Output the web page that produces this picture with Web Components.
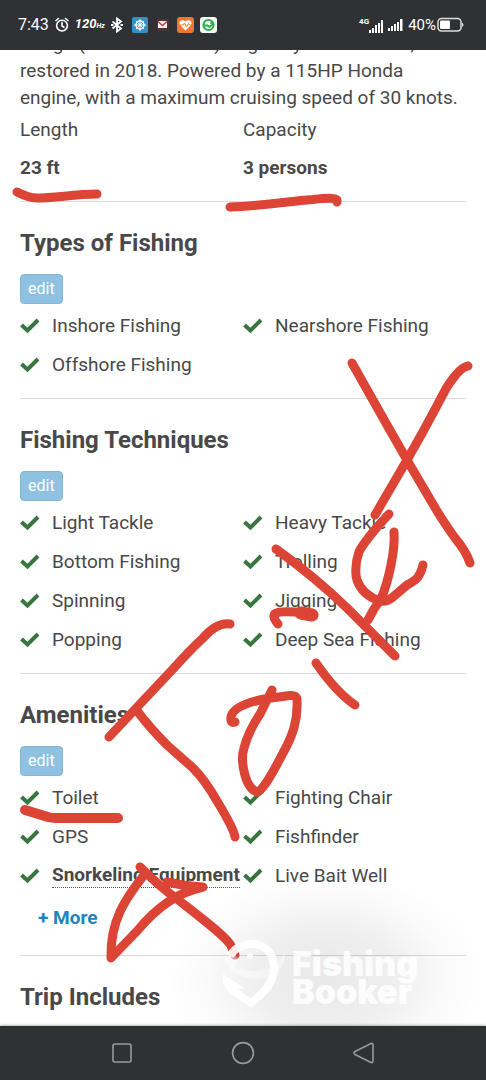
<!DOCTYPE html>
<html lang="en">
<head>
<meta charset="utf-8">
<meta name="viewport" content="width=device-width, initial-scale=1">
<title>Boat details</title>
<style>
  html, body { margin: 0; height: 100%; }
  body { font-family: Roboto, "Liberation Sans", sans-serif; color: #484848; background: #fff; }
</style>
</head>
<body>
<boat-screen>
  <status-bar slot="status"></status-bar>
  <boat-summary></boat-summary>
  <feature-section heading="Types of Fishing">
    <feature-item>Inshore Fishing</feature-item>
    <feature-item>Nearshore Fishing</feature-item>
    <feature-item>Offshore Fishing</feature-item>
  </feature-section>
  <feature-section heading="Fishing Techniques">
    <feature-item>Light Tackle</feature-item>
    <feature-item>Heavy Tackle</feature-item>
    <feature-item>Bottom Fishing</feature-item>
    <feature-item>Trolling</feature-item>
    <feature-item>Spinning</feature-item>
    <feature-item>Jigging</feature-item>
    <feature-item>Popping</feature-item>
    <feature-item>Deep Sea Fishing</feature-item>
  </feature-section>
  <feature-section heading="Amenities" more>
    <feature-item>Toilet</feature-item>
    <feature-item>Fighting Chair</feature-item>
    <feature-item>GPS</feature-item>
    <feature-item>Fishfinder</feature-item>
    <feature-item hint>Snorkeling Equipment</feature-item>
    <feature-item>Live Bait Well</feature-item>
  </feature-section>
  <feature-section heading="Trip Includes"></feature-section>
  <pen-marks slot="over"></pen-marks>
  <brand-mark slot="over"></brand-mark>
  <nav-bar slot="nav"></nav-bar>
</boat-screen>

<script>
  const define = (name, html, setup) => customElements.define(name, class extends HTMLElement {
    constructor() {
      super();
      this.attachShadow({ mode: "open" }).innerHTML = html;
    }
    connectedCallback() { if (setup) setup(this, this.shadowRoot); }
  });

  define("boat-screen", `
    <style>
      :host { display: flex; flex-direction: column; height: 100vh; position: relative; overflow: hidden; }
      main { flex: 1; min-height: 0; overflow: hidden; padding: 0 20px; }
    </style>
    <slot name="status"></slot>
    <main><slot></slot></main>
    <slot name="nav"></slot>
    <slot name="over"></slot>`);

  define("status-bar", `
    <style>
      :host { display: flex; justify-content: space-between; align-items: center; flex: none; height: 50px;
        padding: 0 21px 0 18px; box-sizing: border-box; background: #303134; color: #fff; font-size: 16px; line-height: 20px; }
      div { display: flex; align-items: center; gap: 6px; }
      .right { gap: 5px; }
      .hz { font-size: 13px; font-weight: 700; font-style: italic; }
      .hz small { font-size: 7px; }
      svg { display: block; flex: none; }
      .net { display: flex; align-items: flex-end; }
      .pct { display: flex; gap: 1px; font-size: 15px; }
      .net b { font-size: 8px; line-height: 8px; align-self: flex-start; }
    </style>
    <div>
      <span>7:43</span>
      <svg width="14" height="16" viewBox="0 0 14 16" fill="none" stroke="#fff" stroke-width="1.6" stroke-linecap="round"><circle cx="7" cy="8.600" r="5.400"/><path d="M7 5.500V9l2 1.200M1 3.500 3.500 1.500M13 3.500 10.500 1.500"/></svg>
      <span class="hz">120<small>Hz</small></span>
      <svg width="12" height="16" viewBox="0 0 12 16" fill="none" stroke="#fff" stroke-width="1.800"><path d="M1.500 4.500 10 11.500 6 14.500V1.500L10 4.500 1.500 11.500"/><path d="M0 8h2.500M9.500 8H12"/></svg>
      <svg width="90" height="18" viewBox="0 0 90 18">
        <rect x="3" y="1" width="16" height="16" rx="2" fill="#3592c4"/>
        <g fill="none" stroke="#fff" stroke-width="1.300"><circle cx="11" cy="9" r="4"/><circle cx="11" cy="9" r="1"/><path d="M11 3v4.500M11 10.500V15M5 9h4.500M12.500 9H17M7 5l8 8M15 5l-8 8" stroke-width="1"/></g>
        <rect x="28" y="3" width="12" height="12" fill="#493539"/>
        <rect x="29" y="5" width="9" height="7" fill="#f7eeee"/><path d="M29 5.500 33.500 9.500 38 5.500" fill="none" stroke="#cc3a3e" stroke-width="1.500"/>
        <rect x="48" y="1" width="17" height="16" rx="3" fill="#ec7733"/>
        <path d="M56.500 14.500 51 9C49 6 52.500 2.500 56.500 5.500 60.500 2.500 64 6 62 9Z" fill="#fff"/><path d="M50 9h4l1.500-2 2 4 2-3.500 1 1.500H63" fill="none" stroke="#ec7733"/>
        <rect x="71" y="1" width="17" height="16" rx="3" fill="#f2fbf4"/>
        <circle cx="79.500" cy="9" r="5" fill="none" stroke="#36ab52" stroke-width="2.200"/><path d="M75 9.500h3.500l2 1.500 3-3-2-1.500" fill="none" stroke="#36ab52" stroke-width="1.800"/>
      </svg>
    </div>
    <div class="right">
      <span class="net"><b>4G</b><svg width="14" height="15" viewBox="0 0 14 15" fill="#fff"><path d="M0 12h2v3H0zM3 10h2v5H3zM6 7h2v8H6zM9 5h2v10H9zM12 2h2v13h-2z"/></svg></span>
      <svg width="15" height="15" viewBox="0 0 15 15" fill="#fff"><path d="M0 10h2v3H0zM3 8h2v5H3zM6 6h2v7H6zM9 4h2v9H9zM12 1h2.500v12H12z"/></svg>
      <span class="pct"><span>40%</span>
      <svg width="28" height="20" viewBox="0 0 28 20"><rect x="1" y="3.500" width="23" height="12.500" rx="3.500" fill="none" stroke="#ddd" stroke-width="1.500"/><path d="M25 7.500q3 2.300 0 4.600z" fill="#ddd"/><rect x="3" y="5.500" width="10" height="8.500" rx="1" fill="#fff"/></svg></span>
    </div>`);

  define("boat-summary", `
    <style>
      :host { display: block; font-size: 19px; padding-bottom: 14px; }
      p { margin: -20px 0 0; line-height: 27px; white-space: nowrap; }
      dl { margin: 0; display: grid; grid-template-columns: 1fr 1fr; line-height: 38px; }
      dd { margin: 0; font-weight: 700; }
    </style>
    <p>Panga (Center Console) originally built in 2010, and<br>restored in 2018. Powered by a 115HP Honda<br>engine, with a maximum cruising speed of 30 knots.</p>
    <dl><div><dt>Length</dt><dd>23 ft</dd></div><div><dt>Capacity</dt><dd>3 persons</dd></div></dl>`);

  define("feature-section", `
    <style>
      :host { display: block; border-top: 1px solid #dcdcdc; padding: 26px 0 14px; }
      h2 { margin: 0 0 16px; font-size: 24px; line-height: 30px; font-weight: 700; }
      button { display: block; height: 30px; margin: 0 0 2px; padding: 0 7px; border: 1px solid #83b7da; border-radius: 4px;
        background: #8fc1e0; color: #fff; font: 16px/28px Roboto, sans-serif; }
      .list { display: grid; grid-template-columns: 1fr 1fr; }
      a { display: block; width: max-content; margin-left: 18px; font-size: 19px; line-height: 46px; font-weight: 700; color: #2482be; text-decoration: none; }
    </style>
    <h2></h2>
    <button type="button">edit</button>
    <div class="list" role="list"><slot></slot></div>
    <a href="#more">+ More</a>`,
    (host, root) => {
      root.querySelector("h2").textContent = host.getAttribute("heading");
      if (!host.hasAttribute("more")) root.querySelector("a").remove();
      if (!host.querySelector("feature-item")) root.querySelector("button").remove();
    });

  define("feature-item", `
    <style>
      :host { display: flex; align-items: center; gap: 12px; height: 39px; min-width: 0; font-size: 19px; line-height: 24px; white-space: nowrap; }
      :host([hint]) span { font-weight: 700; border-bottom: 1px dotted #555; }
      svg { flex: none; }
    </style>
    <svg width="20" height="16" viewBox="0 0 20 16" aria-hidden="true"><path d="M1.500 7 7.500 12.500 18 2" fill="none" stroke="#39753f" stroke-width="4"/></svg>
    <span><slot></slot></span>`,
    host => host.setAttribute("role", "listitem"));

  define("nav-bar", `
    <style>
      :host { display: flex; justify-content: center; align-items: center; gap: 97px; flex: none; height: 54px; background: #303134; box-shadow: 0 -1px 2px #bbb; }
      button { width: 24px; height: 24px; padding: 0; border: 0; background: none; }
      svg { display: block; fill: none; stroke: #999a9d; stroke-width: 1.600; stroke-linejoin: round; }
    </style>
    <button type="button" aria-label="Recent apps"><svg width="24" height="24"><rect x="3" y="3" width="18" height="18" rx="2"/></svg></button>
    <button type="button" aria-label="Home"><svg width="24" height="24"><circle cx="12" cy="12" r="10.400"/></svg></button>
    <button type="button" aria-label="Back"><svg width="24" height="24"><path d="M19 2.500Q21 2 21 4V20Q21 22 19 21.500L3 13.500Q1 12 3 10.500Z"/></svg></button>`);

  define("pen-marks", `
    <style>
      :host { position: absolute; left: 0; top: 0; pointer-events: none; }
      svg { display: block; fill: none; stroke: #dc4436; stroke-width: 9; stroke-linecap: round; stroke-linejoin: round; }
    </style>
    <svg width="486" height="1080" viewBox="0 0 486 1080" aria-hidden="true">
      <path d="M17 192Q29 198 37 198C55 198 75 194 97 194M230 207C260 206 300 200 313 199.500Q337 197 337 200V202"/>
      <path d="M352 363 387 425 407 460 437 511Q443 521 455 538 466 551 470 563"/>
      <path d="M468 366Q460 367 447 387C437 405 430 420 407 460L375 515"/>
      <path d="M389 514 378 526Q362 545 359 552C354 566 356 577 357 580Q362 595 380 601 387 602 393 597L407 585Q416 580 418 577 422 571 423 565"/>
      <path d="M394 532Q395 545 391 565 387 585 381 599L374 609 368 620"/>
      <path d="M276 549Q315 577 347 608L395 656"/>
      <path d="M278 624Q272 617 275 613.500 279 611 295 612L313 614"/>
      <path d="M301 613 312 615" stroke-width="13"/>
      <path d="M230 624Q217 622 203 638 190 650 173 669L109 737"/>
      <path d="M138 712Q150 728 167 745L193 768Q205 780 217 801 234 829 235 837"/>
      <path d="M316 663Q336 692 355 705"/>
      <path d="M235 722Q230 724 231 717 233 705 267 698.500L290 695.500Q297 695 297 700C298 720 293 735 283 753Q263 792 257 792C245 788 240 761 244 748Q248 732 260 714L272 690"/>
      <path d="M25 810 48 817Q52 818 55 818H118" stroke-width="10"/>
      <path d="M140 867Q159 886 177 899C200 917 228 938 231 946L235 955"/>
      <path d="M167 882Q184 886 203 887 182 892 168 902 152 913 138 930L111 958C110 920 126 898 144 875"/>
    </svg>`);

  define("brand-mark", `
    <style>
      :host { position: absolute; right: 0; bottom: 54px; width: 322px; height: 140px; box-sizing: border-box; display: flex; align-items: flex-end;
        gap: 4px; padding: 0 0 17px 56px; pointer-events: none;
        background: radial-gradient(ellipse 160px 110px at 162px 92px, #00000017, #00000010 45%, #00000005 75%, #0000 100%); }
      svg { display: block; flex: none; }
      strong { display: block; font: 900 34px/28px Inter, sans-serif; color: #ffffffe6; padding-bottom: 3px; }
    </style>
    <svg width="68" height="70" viewBox="0 0 68 70" fill="none" aria-hidden="true">
      <path d="M10 17C20-1 54 0 54 29 54 45 43 54 31 64 21 58 9 49 6 40" stroke="#ffffffe6" stroke-width="8"/>
      <path d="M2 35 26 50 18 50 22 58 12 56Q3 49 2 35Z" fill="#ffffffe6"/>
      <path d="M5 17Q14 32 31 32 56 32 65 13 65 29 54 36 34 44 17 35 5 29 5 17Z" fill="#ffffff70"/>
      <circle cx="30" cy="17" r="3" fill="#fff"/>
      <path d="M7 18 15 14 19 23 11 28Z" fill="#ffffff66"/>
    </svg>
    <strong>Fishing<br>Booker</strong>`);
</script>
</body>
</html>
